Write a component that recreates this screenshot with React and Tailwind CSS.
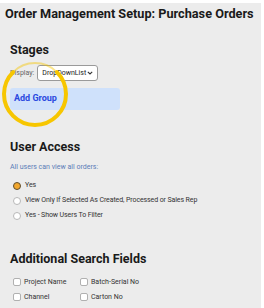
import React from "react";

function Radio({ checked, label }) {
  return (
    <div className="flex items-center h-[15px]">
      {checked ? (
        <span className="w-[8px] h-[8px] rounded-full bg-[#f2a72e] border-[1.5px] border-[#5e4e30] ml-[13px] mr-[4px]" />
      ) : (
        <span className="w-[8px] h-[8px] rounded-full bg-white border border-[#b8b8b8] ml-[13px] mr-[4px]" />
      )}
      <span className="text-[7px] text-[#333] tracking-[-0.1px]">{label}</span>
    </div>
  );
}

function Check({ label, w }) {
  return (
    <div className={`flex items-center h-[10px] ${w}`}>
      <span className="w-[8px] h-[8px] rounded-[2px] bg-white border border-[#b0b0b0] mr-[3px]" />
      <span className="text-[7px] text-[#333]">{label}</span>
    </div>
  );
}

export default function App() {
  return (
    <div
      className="w-[264px] h-[308px] bg-white pt-[3px] pr-[3px] overflow-hidden"
      style={{ fontFamily: "Roboto, 'Liberation Sans', sans-serif" }}
    >
      <div className="relative h-[305px] w-[261px] bg-[#ececec]">
        <div className="pl-[5px] pt-[4px] text-[12.7px] font-bold text-[#1a1a1a] leading-[14px]">
          Order Management Setup: Purchase Orders
        </div>
        <div className="pl-[10px] mt-[21px] text-[12.5px] font-bold text-[#1a1a1a] leading-[16px]">Stages</div>
        <div className="pl-[10px] mt-[7px] flex items-center h-[16px]">
          <span className="text-[7px] text-[#666] mr-[3px]">Display:</span>
          <div className="w-[61px] h-[16px] bg-white border border-[#9a9a9a] rounded-[3px] flex items-center justify-between pl-[4px] pr-[4px]">
            <span className="text-[7px] text-[#222]">DropDownList</span>
            <svg width="6" height="4" viewBox="0 0 6 4">
              <path d="M0.8 0.8 L3 3 L5.2 0.8" fill="none" stroke="#333" strokeWidth="1.1" />
            </svg>
          </div>
        </div>
        <div className="ml-[10px] mt-[7px] w-[110px] h-[22px] bg-[#cfe1fb] rounded-[3px] flex items-center pl-[4px]">
          <span className="text-[9px] font-bold text-[#2a49e0]">Add Group</span>
        </div>
        <div className="pl-[10px] mt-[29px] text-[12.5px] font-bold text-[#1a1a1a] leading-[16px]">User Access</div>
        <div className="pl-[10px] mt-[7px] text-[7px] text-[#5b7db8] leading-[10px]">All users can view all orders:</div>
        <div className="mt-[6px] flex flex-col">
          <Radio checked label="Yes" />
          <Radio label="View Only If Selected As Created, Processed or Sales Rep" />
          <Radio label="Yes - Show Users To Filter" />
        </div>
        <div className="pl-[10px] mt-[28px] text-[12.5px] font-bold text-[#1a1a1a] leading-[16px]">Additional Search Fields</div>
        <div className="pl-[13px] mt-[10px] flex flex-col gap-[5px]">
          <div className="flex">
            <Check label="Project Name" w="w-[67px]" />
            <Check label="Batch-Serial No" w="" />
          </div>
          <div className="flex">
            <Check label="Channel" w="w-[67px]" />
            <Check label="Carton No" w="" />
          </div>
        </div>
        <svg className="absolute left-0 top-0 pointer-events-none" width="261" height="305" viewBox="0 3 261 305">
          <path
            d="M 13.1 72.1 A 31 31 0 1 0 56.9 72.1"
            fill="none"
            stroke="#f7c600"
            strokeWidth="4"
            strokeLinecap="round"
          />
          <path
            d="M 56.9 72.1 A 31 31 0 0 0 13.1 72.1"
            fill="none"
            stroke="#f7c600"
            strokeOpacity="0.45"
            strokeWidth="2"
            strokeLinecap="round"
          />
        </svg>
      </div>
    </div>
  );
}
